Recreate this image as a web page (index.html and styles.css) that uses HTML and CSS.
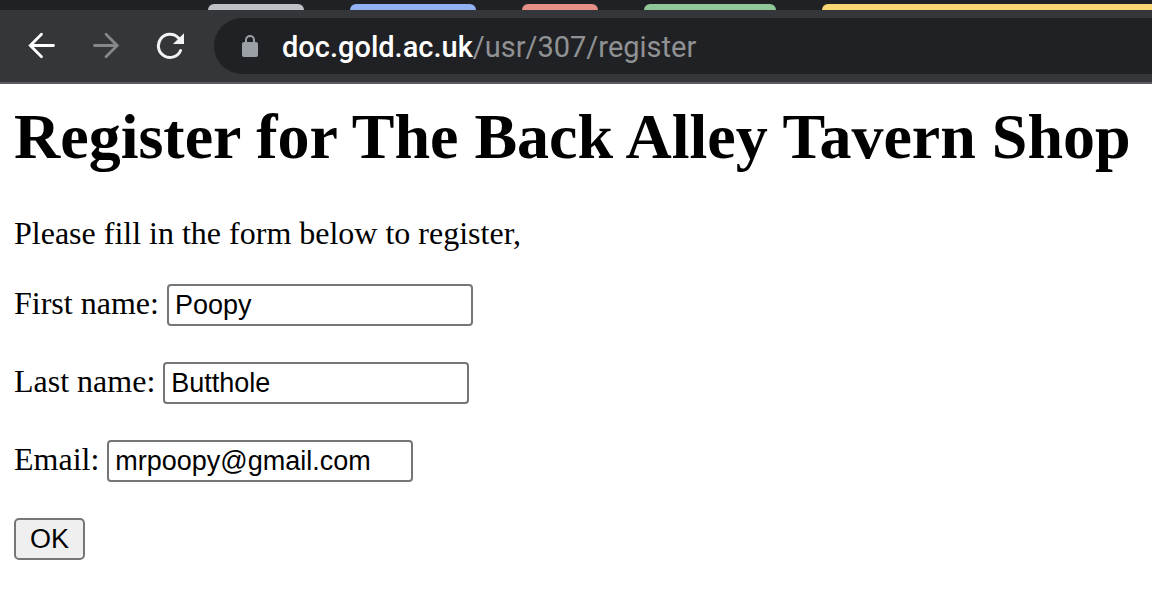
FILE: index.html
```html
<!DOCTYPE html>
<html lang="en">
<head>
<meta charset="utf-8">
<title>Register</title>
<link rel="stylesheet" href="styles.css">
</head>
<body>
<header class="browser">
  <div class="tabs">
    <span class="tab tab-grey"></span>
    <span class="tab tab-blue"></span>
    <span class="tab tab-red"></span>
    <span class="tab tab-green"></span>
    <span class="tab tab-yellow"></span>
  </div>
  <div class="toolbar">
    <nav class="controls">
      <button class="icon-button" type="button" aria-label="Back">
        <svg width="28" height="28" viewBox="0 0 28 28" fill="none" stroke="#fff" stroke-width="2.8" stroke-linecap="round" stroke-linejoin="miter"><path d="M25.500 13.500H2.500M13.500 2.300L2.300 13.500L13.500 24.700"/></svg>
      </button>
      <button class="icon-button" type="button" aria-label="Forward" disabled>
        <svg width="28" height="28" viewBox="0 0 28 28" fill="none" stroke="#868788" stroke-width="2.800" stroke-linecap="round" stroke-linejoin="miter"><path d="M2.500 13.500H25M14 2.300L25.200 13.500L14 24.700"/></svg>
      </button>
      <button class="icon-button" type="button" aria-label="Reload">
        <svg width="28" height="28" viewBox="0 0 28 28" fill="none"><path d="M24.600 18.500A11.600 11.600 0 1 1 22.500 6" stroke="#f1f3f4" stroke-width="3" stroke-linecap="round"/><path d="M28 1.300V12H17Z" fill="#f1f3f4"/></svg>
      </button>
    </nav>
    <div class="address">
      <svg width="16" height="22" viewBox="0 0 16 22" fill="none"><rect y="7" width="16" height="15" rx="2" fill="#9aa0a6"/><path d="M4 8V5A4 4 0 0 1 12 5V8" stroke="#9aa0a6" stroke-width="2"/></svg>
      <span class="url"><span class="domain">doc.gold.ac.uk</span>/usr/307/register</span>
    </div>
  </div>
</header>
<main class="page">
  <h1 class="title">Register for The Back Alley Tavern Shop</h1>
  <p class="intro">Please fill in the form below to register,</p>
  <form class="form">
    <div class="row"><label for="first">First name:</label><input class="field" id="first" type="text" value="Poopy"></div>
    <div class="row"><label for="last">Last name:</label><input class="field" id="last" type="text" value="Butthole"></div>
    <div class="row"><label for="email">Email:</label><input class="field" id="email" type="text" value="mrpoopy@gmail.com"></div>
    <div class="row"><button class="submit" type="submit">OK</button></div>
  </form>
</main>
</body>
</html>
```
FILE: styles.css
```css
* { box-sizing: border-box; }
body {
  margin: 0;
  background: #fff;
  color: #000;
  font-family: "Liberation Serif", "Times New Roman", serif;
  font-size: 32px;
  line-height: 36px;
}
.browser { border-bottom: 2px solid #5d5e60; background: #35363a; }
.tabs {
  display: flex;
  gap: 46px;
  padding: 4px 0 0 208px;
  background: #202124;
}
.tab { height: 6px; border-radius: 6px 6px 0 0; }
.tab-grey { width: 96px; background: #bdc1c6; }
.tab-blue { width: 126px; background: #92b1f2; }
.tab-red { width: 76px; background: #e58f86; }
.tab-green { width: 132px; background: #90c799; }
.tab-yellow { flex: 1; background: #f9d674; border-top-right-radius: 0; }
.toolbar { display: flex; align-items: center; padding: 8px 0 8px 28px; }
.controls { display: flex; gap: 36px; }
.icon-button {
  display: flex;
  padding: 0;
  border: 0;
  background: none;
}
.address {
  display: flex;
  flex: 1;
  align-items: center;
  gap: 24px;
  height: 56px;
  margin-left: 30px;
  padding-left: 28px;
  border-radius: 28px 0 0 28px;
  background: #202124;
}
.url {
  padding-top: 1px;
  color: #909193;
  font-family: Roboto, sans-serif;
  font-size: 29px;
  white-space: nowrap;
}
.domain { color: #fff; font-weight: 500; }
.page { padding: 16px 14px; }
.title { margin: 0; font-size: 64px; line-height: 74px; }
.intro { margin: 41px 0 33px; }
.form { display: grid; gap: 36px; }
.row { display: flex; align-items: center; gap: 8px; line-height: 38px; }
.row label { padding-bottom: 4px; }
.field {
  width: 306px;
  height: 42px;
  padding: 0 6px;
  border: 2px solid #767676;
  border-radius: 4px;
  background: #fff;
  color: #000;
  font: 27px "Liberation Sans", Arial, sans-serif;
}
.submit {
  height: 42px;
  padding: 0 14px;
  border: 2px solid #767676;
  border-radius: 5px;
  background: #efefef;
  color: #000;
  font: 27px "Liberation Sans", Arial, sans-serif;
}
```
